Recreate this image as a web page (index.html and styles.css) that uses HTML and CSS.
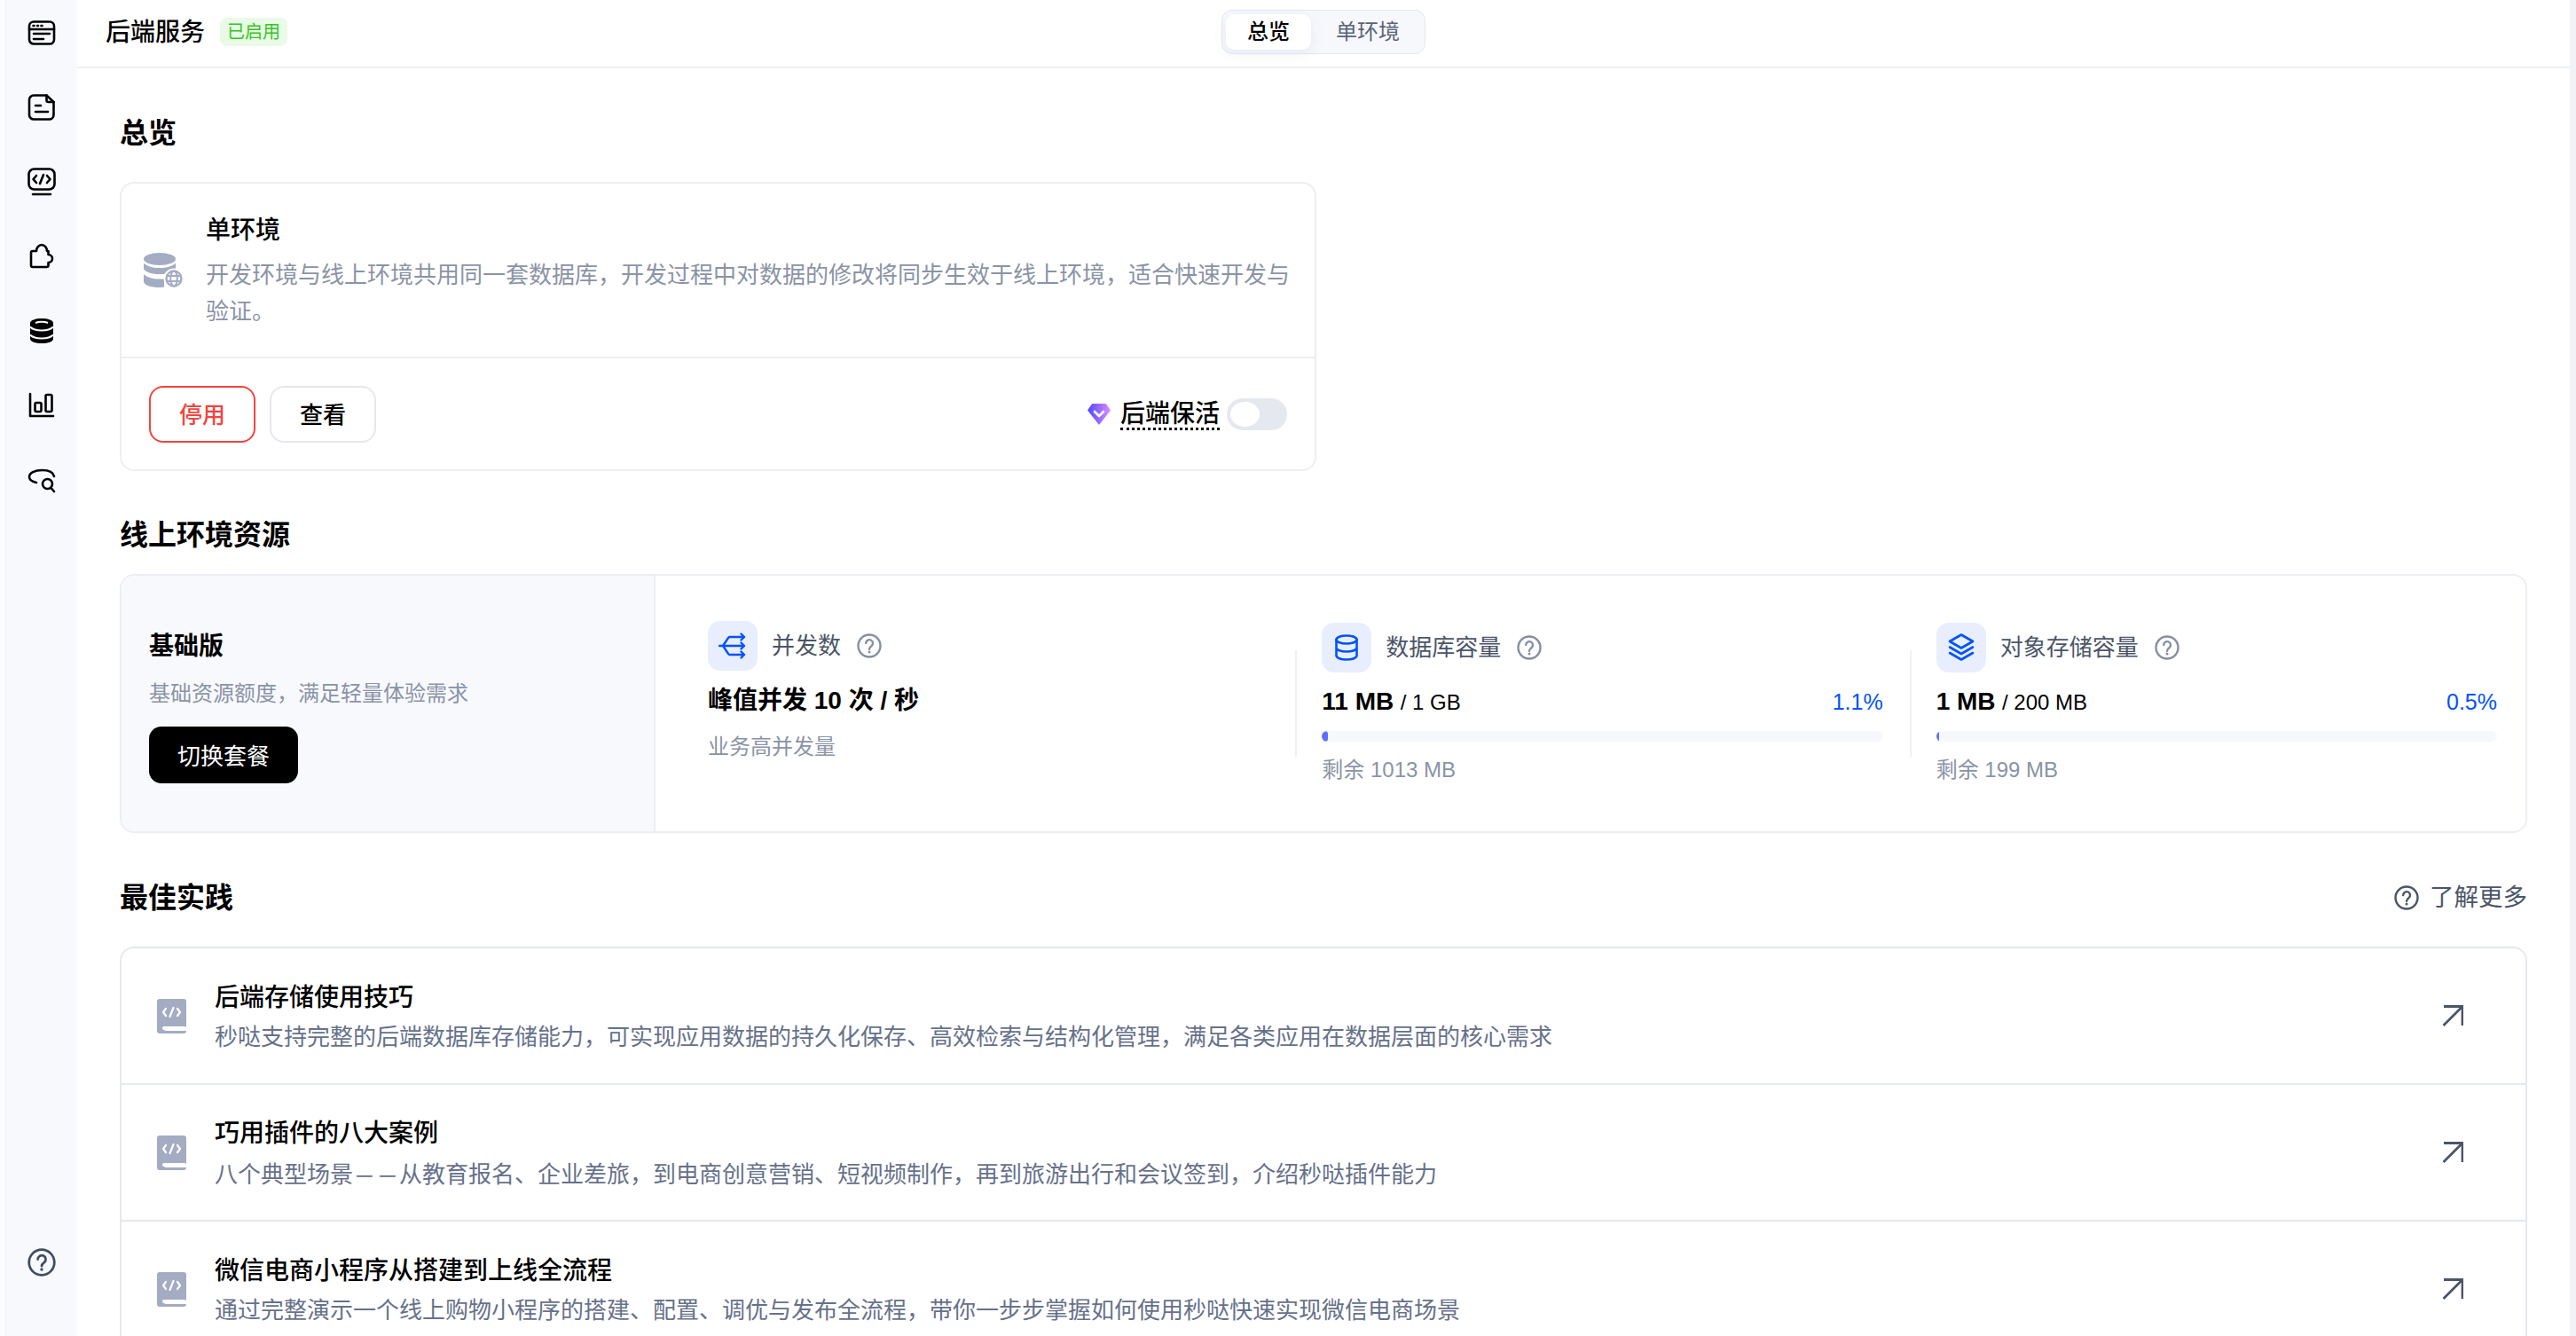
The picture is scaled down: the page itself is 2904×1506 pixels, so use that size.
FILE: index.html
```html
<!DOCTYPE html>
<html lang="zh-CN">
<head>
<meta charset="utf-8">
<title>后端服务</title>
<link rel="stylesheet" href="styles.css">
</head>
<body>
<svg class="defs" width="0" height="0">
  <defs>
    <symbol id="i-help" viewBox="0 0 28 28">
      <circle cx="14" cy="14" r="12.5" fill="none" stroke="currentColor" stroke-width="2.4"/>
      <path d="M10.2 11a3.9 3.9 0 1 1 6.3 3.1c-1.500 1.100-2.500 1.800-2.500 3.600" fill="none" stroke="currentColor" stroke-width="2.4" stroke-linecap="round"/>
      <circle cx="14" cy="21" r="1.5" fill="currentColor"/>
    </symbol>
    <linearGradient id="gem" x1="0" y1="0" x2="1" y2="0">
      <stop offset="0" stop-color="#4f46ff"/>
      <stop offset="1" stop-color="#dc8dff"/>
    </linearGradient>
    <symbol id="i-book" viewBox="0 0 33 39">
      <path d="M3 0h27a3 3 0 0 1 3 3v30H9a2 2 0 0 0 0 3h24a3 3 0 0 1-3 3H3a3 3 0 0 1-3-3V3a3 3 0 0 1 3-3z" fill="#a3acc2"/>
      <path d="M10 11l-3 4 3 4M23 11l3 4-3 4M18.500 10l-4 10" fill="none" stroke="#fff" stroke-width="2.200" stroke-linecap="round" stroke-linejoin="round"/>
      <rect x="6" y="31" width="27" height="4" rx="2" fill="#fff"/>
    </symbol>
    <symbol id="i-arrow" viewBox="0 0 24 24">
      <path d="M1.500 23L23 1.500M2 1.500h21V23" fill="none" stroke="currentColor" stroke-width="2.800"/>
    </symbol>
  </defs>
</svg>

<div class="shell">
  <div class="edge-left"></div>

  <aside class="sidebar">
    <nav class="nav">
      <svg class="nav-icon" viewBox="0 0 32 32" fill="none" stroke="#000" stroke-width="2.600" stroke-linecap="round">
        <rect x="2" y="3.500" width="28" height="25" rx="5"/>
        <path d="M6.500 8h1M11 8h1M15.500 8h1M2 12h28M7 17h18M7 23h11"/>
      </svg>
      <svg class="nav-icon" viewBox="0 0 32 32" fill="none" stroke="#000" stroke-width="2.600" stroke-linecap="round" stroke-linejoin="round">
        <path d="M7 2.500h14.500L29.500 10v14.500a5 5 0 0 1-5 5H7a5 5 0 0 1-5-5v-17a5 5 0 0 1 5-5z"/>
        <path d="M21.500 2.500V8a2 2 0 0 0 2 2h6M9 14h6M9 21h14"/>
      </svg>
      <svg class="nav-icon" viewBox="0 0 32 32" fill="none" stroke="#000" stroke-width="2.600" stroke-linecap="round" stroke-linejoin="round">
        <rect x="1.500" y="1.500" width="29" height="23" rx="6"/>
        <path d="M10 9l-3.500 4 3.500 4M22 9l3.500 4-3.500 4M18 8l-4 10M6 30h20"/>
      </svg>
      <svg class="nav-icon" viewBox="0 0 32 32" fill="none" stroke="#000" stroke-width="2.600" stroke-linejoin="round">
        <path d="M4 12a2 2 0 0 1 2-2h4a6 7 0 0 1 12 0h1.500v4a4.500 4.500 0 0 1 0 9v3a2 2 0 0 1-2 2H6a2 2 0 0 1-2-2z"/>
      </svg>
      <svg class="nav-icon" viewBox="0 0 32 32">
        <path d="M3 7c0-3 6-5 13-5s13 2 13 5v18c0 3-6 5-13 5S3 28 3 25z" fill="#000"/>
        <path d="M3 11.500c3 3 8 4 13 4s10-1 13-4M3 20.500c3 3 8 4 13 4s10-1 13-4M9 7c2-1 4-1.300 7-1.300s5 .3 7 1.300" fill="none" stroke="#f8f9fd" stroke-width="2"/>
      </svg>
      <svg class="nav-icon" viewBox="0 0 32 32" fill="none" stroke="#000" stroke-width="2.600" stroke-linecap="round" stroke-linejoin="round">
        <path d="M3 3v25h26"/>
        <rect x="8.500" y="13" width="7" height="10" rx="1.500"/>
        <rect x="20.500" y="4" width="7" height="19" rx="1.500"/>
      </svg>
      <svg class="nav-icon" viewBox="0 0 32 32" fill="none" stroke="#000" stroke-width="2.600" stroke-linecap="round" stroke-linejoin="round">
        <path d="M30 12c-1-4.500-6.500-7-13.500-7C8 5 2 8 2 12.500c0 3.500 3 5.500 8 6.500"/>
        <circle cx="22.500" cy="20.500" r="5.500"/>
        <path d="M26.500 25l3.500 4"/>
      </svg>
    </nav>
    <svg class="nav-help"><use href="#i-help"/></svg>
  </aside>

  <main class="main">
    <header class="topbar">
      <div class="topbar-left">
        <span class="app-name">后端服务</span>
        <span class="badge">已启用</span>
      </div>
      <div class="tabs">
        <span class="tab tab-active">总览</span>
        <span class="tab">单环境</span>
      </div>
    </header>

    <div class="content">
      <h2 class="section-title first">总览</h2>
      <section class="env-card">
        <div class="env-top">
          <svg class="env-icon" viewBox="0 0 44 39">
            <ellipse cx="18" cy="7" rx="18" ry="7" fill="#a3acc2"/>
            <path d="M0 11.500C3 15 10 17 18 17s15-2 18-5.500v6c0 .5-.1 1-.3 1.500-2.700 3-9.500 5-17.700 5S3 22 .3 19C.1 18.500 0 18 0 17.500z" fill="#a3acc2"/>
            <path d="M0 24c3 3.500 10 5.500 18 5.500 2 0 3 0 5-.3V38.500c-2 .3-3 .5-5 .5-10 0-18-2.500-18-7z" fill="#a3acc2"/>
            <circle cx="34" cy="29" r="11.500" fill="#fff"/>
            <circle cx="34" cy="29" r="8.500" fill="none" stroke="#a3acc2" stroke-width="2.400"/>
            <ellipse cx="34" cy="29" rx="3.800" ry="8.500" fill="none" stroke="#a3acc2" stroke-width="2"/>
            <path d="M26 26h16M26 32h16" stroke="#a3acc2" stroke-width="2"/>
          </svg>
          <div class="env-text">
            <h3 class="env-title">单环境</h3>
            <p class="env-desc">开发环境与线上环境共用同一套数据库，开发过程中对数据的修改将同步生效于线上环境，适合快速开发与验证。</p>
          </div>
        </div>
        <div class="env-actions">
          <div class="btn-group">
            <button class="btn btn-danger">停用</button>
            <button class="btn">查看</button>
          </div>
          <div class="keepalive">
            <svg class="gem" viewBox="0 0 26 24">
              <path d="M6 0h14a1.500 1.500 0 0 1 1.200.6L26 7.500 13 24 0 7.500 4.800.6A1.500 1.500 0 0 1 6 0z" fill="url(#gem)"/>
              <path d="M8 9l5 5 5-5" fill="none" stroke="#fff" stroke-width="2.600" stroke-linecap="round" stroke-linejoin="round"/>
            </svg>
            <span class="keepalive-label">后端保活</span>
            <span class="toggle"><span class="knob"></span></span>
          </div>
        </div>
      </section>

      <h2 class="section-title second">线上环境资源</h2>
      <section class="plan-card">
        <div class="plan-side">
          <h3 class="plan-name">基础版</h3>
          <p class="plan-desc">基础资源额度，满足轻量体验需求</p>
          <button class="btn-primary">切换套餐</button>
        </div>
        <div class="metrics">
          <div class="metric">
            <div class="metric-head">
              <span class="metric-icon">
                <svg viewBox="0 0 32 32" fill="none" stroke="#0052ff" stroke-width="2.400" stroke-linecap="round" stroke-linejoin="round">
                  <path d="M1 16h28M5 16l6-9a2 2 0 0 1 2-1h16M5 16l6 9a2 2 0 0 0 2 1h16M25.500 2.500L29 6l-3.500 3.500M25.500 12.500L29 16l-3.500 3.500M25.500 22.500L29 26l-3.500 3.500"/>
                </svg>
              </span>
              <span class="metric-label">并发数</span>
              <svg class="help"><use href="#i-help"/></svg>
            </div>
            <div class="metric-value">峰值并发 10 次 / 秒</div>
            <div class="metric-note">业务高并发量</div>
          </div>
          <div class="metric metric-bar">
            <div class="metric-head">
              <span class="metric-icon">
                <svg viewBox="0 0 32 32" fill="none" stroke="#0052ff" stroke-width="2.600" stroke-linecap="round" stroke-linejoin="round">
                  <ellipse cx="16" cy="7" rx="11.500" ry="4.500"/>
                  <path d="M4.500 7v18c0 2.500 5 4.500 11.500 4.500s11.500-2 11.500-4.500V7M4.500 16c0 2.500 5 4.500 11.500 4.500s11.500-2 11.500-4.500"/>
                </svg>
              </span>
              <span class="metric-label">数据库容量</span>
              <svg class="help"><use href="#i-help"/></svg>
            </div>
            <div class="usage-line">
              <span><b class="usage-now">11 MB</b> <span class="usage-total">/ 1 GB</span></span>
              <span class="usage-pct">1.1%</span>
            </div>
            <div class="bar"><div class="bar-fill" style="width:1.1%"></div></div>
            <div class="metric-note">剩余 1013 MB</div>
          </div>
          <div class="metric metric-bar">
            <div class="metric-head">
              <span class="metric-icon">
                <svg viewBox="0 0 32 32" fill="none" stroke="#0052ff" stroke-width="2.600" stroke-linecap="round" stroke-linejoin="round">
                  <path d="M16 1.500L29 9l-13 7.500L3 9z"/>
                  <path d="M3 15.500l13 7.500 13-7.500M3 22l13 7.500L29 22"/>
                </svg>
              </span>
              <span class="metric-label">对象存储容量</span>
              <svg class="help"><use href="#i-help"/></svg>
            </div>
            <div class="usage-line">
              <span><b class="usage-now">1 MB</b> <span class="usage-total">/ 200 MB</span></span>
              <span class="usage-pct">0.5%</span>
            </div>
            <div class="bar"><div class="bar-fill" style="width:0.5%"></div></div>
            <div class="metric-note">剩余 199 MB</div>
          </div>
        </div>
      </section>

      <div class="section-row">
        <h2 class="section-title">最佳实践</h2>
        <a class="more"><svg class="more-icon"><use href="#i-help"/></svg>了解更多</a>
      </div>
      <section class="list-card">
        <div class="list-row">
          <svg class="row-icon"><use href="#i-book"/></svg>
          <div class="row-text">
            <div class="row-title">后端存储使用技巧</div>
            <div class="row-desc">秒哒支持完整的后端数据库存储能力，可实现应用数据的持久化保存、高效检索与结构化管理，满足各类应用在数据层面的核心需求</div>
          </div>
          <svg class="row-arrow"><use href="#i-arrow"/></svg>
        </div>
        <div class="list-row">
          <svg class="row-icon"><use href="#i-book"/></svg>
          <div class="row-text">
            <div class="row-title">巧用插件的八大案例</div>
            <div class="row-desc">八个典型场景<span class="dash">—</span><span class="dash">—</span>从教育报名、企业差旅，到电商创意营销、短视频制作，再到旅游出行和会议签到，介绍秒哒插件能力</div>
          </div>
          <svg class="row-arrow"><use href="#i-arrow"/></svg>
        </div>
        <div class="list-row">
          <svg class="row-icon"><use href="#i-book"/></svg>
          <div class="row-text">
            <div class="row-title">微信电商小程序从搭建到上线全流程</div>
            <div class="row-desc">通过完整演示一个线上购物小程序的搭建、配置、调优与发布全流程，带你一步步掌握如何使用秒哒快速实现微信电商场景</div>
          </div>
          <svg class="row-arrow"><use href="#i-arrow"/></svg>
        </div>
      </section>
    </div>
  </main>

  <div class="edge-right"></div>
</div>
</body>
</html>
```
FILE: styles.css
```css
* { box-sizing: border-box; }
html, body { margin: 0; height: 100%; overflow: hidden; background: #fff; }
body { font-family: "Liberation Sans", "Noto Sans CJK SC", sans-serif; color: #000; }
h2, h3, p { margin: 0; }
.defs { position: absolute; }

.shell { display: flex; height: 1506px; overflow: hidden; }
.edge-left { width: 7px; flex: none; background: #fcfcfe; border-right: 1px solid #eef0f6; }
.edge-right { width: 7px; flex: none; background: #f1f2f8; }

.sidebar { width: 80px; flex: none; background: #f8f9fd; display: flex; flex-direction: column; align-items: center; justify-content: space-between; padding: 21px 0 67px; }
.nav { display: flex; flex-direction: column; gap: 52px; }
.nav-icon { width: 32px; height: 32px; display: block; }
.nav-help { width: 32px; height: 32px; color: #414b61; }

.main { flex: 1; min-width: 0; display: flex; flex-direction: column; }

.topbar { height: 77px; flex: none; border-bottom: 2px solid #edf0f4; display: grid; grid-template-columns: 1fr auto 1fr; align-items: start; padding-top: 11px; }
.topbar-left { display: flex; align-items: center; gap: 17px; height: 50px; padding-left: 32px; }
.app-name { height: 40px; padding-top: 1px; font-size: 28px; font-weight: 500; line-height: 40px; }
.badge { height: 32px; padding: 0 8px; line-height: 33px; border-radius: 8px; background: #e9fbe6; color: #35c522; font-size: 20px; }
.tabs { grid-column: 2; display: flex; gap: 4px; height: 50px; padding: 4px; border: 1px solid #e6e8f1; border-radius: 12px; background: #f7f8fc; }
.tab { height: 40px; padding: 0 24px; line-height: 39px; font-size: 24px; color: #5a6478; border-radius: 10px; }
.tab-active { width: 96px; color: #000; font-weight: 500; background: #fff; box-shadow: 0 4px 16px rgba(120, 130, 180, .12); }

.content { padding: 51px 48px 0 48px; }
.section-title { font-size: 32px; line-height: 44px; font-weight: 700; }
.section-title.first { margin-bottom: 33px; }
.section-title.second { margin: 50px 0 22px; }
.section-row { display: flex; justify-content: space-between; align-items: center; margin: 51px 0 33px; }
.more { display: flex; align-items: center; gap: 12px; font-size: 27.500px; line-height: 44px; color: #4b5568; }
.more-icon { width: 28px; height: 28px; }

.env-card { width: 1349px; height: 326px; border: 2px solid #eceef3; border-radius: 16px; }
.env-top { display: flex; align-items: center; height: 197px; padding: 31px 24px 31px 25px; border-bottom: 2px solid #eceef3; }
.env-icon { width: 44px; height: 39px; flex: none; margin-right: 26px; }
.env-title { margin-top: 2px; font-size: 28px; line-height: 40px; font-weight: 500; }
.env-desc { margin-top: 10px; font-size: 26px; line-height: 41px; color: #8a93a6; }
.env-actions { display: flex; justify-content: space-between; align-items: center; height: 125px; padding: 0 31px; }
.btn-group { display: flex; gap: 16px; }
.btn { width: 120px; height: 64px; padding: 0 0 2px; border: 2px solid #e6e8ef; border-radius: 16px; background: #fff; font: inherit; font-size: 26px; font-weight: 500; color: #000; }
.btn-danger { border-color: #f4443e; color: #f4443e; }
.keepalive { display: flex; align-items: center; }
.gem { width: 26px; height: 24px; margin-right: 11px; }
.keepalive-label { margin: 4px 8px 0 0; font-size: 28px; line-height: 30px; font-weight: 500; border-bottom: 3px dotted #000; }
.toggle { display: flex; align-items: center; width: 68px; height: 36px; padding: 4px; border-radius: 18px; background: #e5e8ee; }
.knob { width: 33px; height: 28px; border-radius: 50%; background: #fff; }

.plan-card { display: flex; height: 292px; border: 2px solid #eceef3; border-radius: 16px; overflow: hidden; }
.plan-side { width: 602px; flex: none; padding: 60px 31px 0; background: #f8f9fd; border-right: 2px solid #eceef3; }
.plan-name { font-size: 28px; line-height: 40px; font-weight: 700; }
.plan-desc { margin-top: 15px; font-size: 24px; line-height: 36px; color: #8a93a6; }
.btn-primary { display: block; width: 168px; height: 64px; margin-top: 19px; padding: 0 0 2px; border: 0; border-radius: 14px; background: #000; color: #fff; font: inherit; font-size: 26px; }

.metrics { flex: 1; display: grid; grid-template-columns: repeat(3, 1fr); column-gap: 60px; padding: 51px 32px 0 59px; align-items: start; }
.metric { position: relative; min-width: 0; }
.metric-bar { padding-top: 2px; }
.metric-bar::before { content: ""; position: absolute; left: -30px; top: 33px; width: 2px; height: 120px; background: #eef0f5; }
.metric-head { display: flex; align-items: center; height: 56px; }
.metric-icon { display: flex; align-items: center; justify-content: center; width: 56px; height: 56px; margin-right: 16px; border-radius: 14px; background: #e8eefe; }
.metric-icon svg { width: 32px; height: 32px; }
.metric-label { font-size: 26px; line-height: 40px; color: #4b5568; margin-right: 18px; }
.help { width: 28px; height: 28px; color: #858fa4; }
.metric-value { margin-top: 14px; font-size: 28px; line-height: 40px; font-weight: 700; }
.metric-note { margin-top: 14px; font-size: 24px; line-height: 36px; color: #8a93a6; }
.usage-line { display: flex; justify-content: space-between; align-items: baseline; height: 40px; margin-top: 15px; line-height: 36px; }
.usage-now { font-size: 28px; font-weight: 700; }
.usage-total { margin-left: 3px; font-size: 24px; }
.usage-pct { font-size: 25px; color: #0052ff; }
.bar { height: 12px; margin-top: 11px; border-radius: 6px; background: #f7f8fc; overflow: hidden; }
.bar-fill { height: 100%; border-radius: 6px; background: #5f6fff; }

.list-card { border: 2px solid #e6e9ef; border-radius: 16px 16px 0 0; }
.list-row { display: flex; align-items: center; height: 154px; padding: 0 70px 0 40px; border-bottom: 2px solid #e6e9ef; }
.row-icon { width: 33px; height: 39px; flex: none; margin-right: 32px; }
.row-text { flex: 1; padding-top: 1px; }
.row-title { margin-top: 2px; font-size: 28px; line-height: 40px; font-weight: 500; }
.row-desc { margin-top: 5px; font-size: 26px; line-height: 38px; color: #66718a; }
.row-arrow { width: 24px; height: 24px; flex: none; color: #4b5568; }
.dash { display: inline-block; width: 1em; text-align: center; transform: scaleX(.85); font-family: "Noto Sans CJK SC", sans-serif; }
```
